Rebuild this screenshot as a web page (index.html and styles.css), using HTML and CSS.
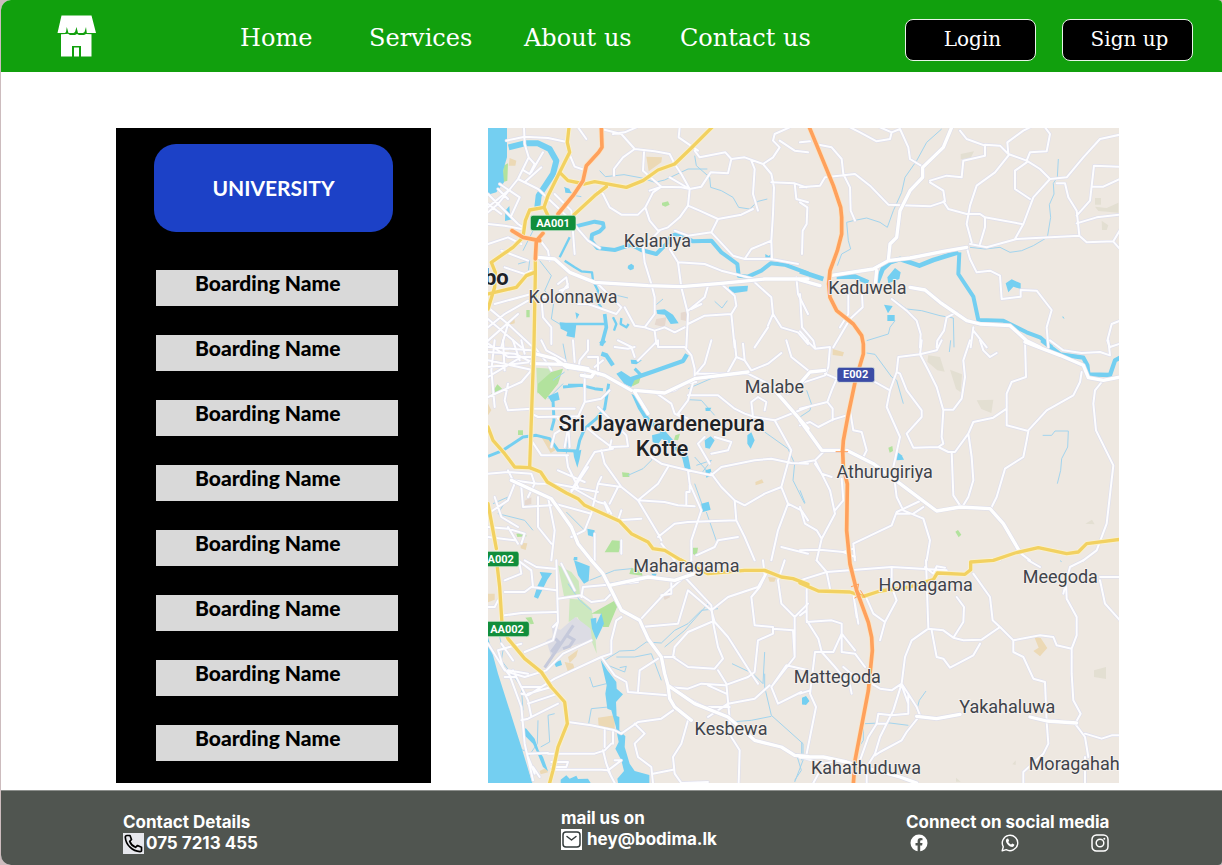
FILE: index.html
```html
<!DOCTYPE html>
<html lang="en">
<head>
<meta charset="utf-8">
<meta name="viewport" content="width=device-width, initial-scale=1">
<title>Bodima</title>
<link rel="stylesheet" href="styles.css">
</head>
<body>
<div class="page">
  <header class="header">
    <a class="logo" href="#" aria-label="Bodima home">
      <svg viewBox="0 0 39 42" width="39" height="42" aria-hidden="true">
        <path fill="#fff" d="M4.500 0.500H34.500L39 18H29.800L29 12L27.500 17L26 18H21L19.500 12L18 17L16.500 18H11.500L9.800 12L9 17L8 18H0.500Z"/>
        <path fill="#fff" d="M4 19.200L9 18.900L11 18.800L13 20H18L20 18.900L22 20H27L29 18.900L34.500 19.200V41.500H24V31H15V41.500H4Z"/>
        <path fill="#fff" d="M17 32.500H22V41.500H17Z"/>
      </svg>
    </a>
    <nav class="nav" aria-label="Main">
      <a href="#">Home</a>
      <a href="#">Services</a>
      <a href="#">About us</a>
      <a href="#">Contact us</a>
    </nav>
    <div class="account">
      <button class="account-button" type="button">Login</button>
      <button class="account-button" type="button">Sign up</button>
    </div>
  </header>

  <main class="main">
    <aside class="sidebar">
      <button class="university" type="button">UNIVERSITY</button>
      <ul class="boardings">
        <li><button class="boarding" type="button">Boarding Name</button></li>
        <li><button class="boarding" type="button">Boarding Name</button></li>
        <li><button class="boarding" type="button">Boarding Name</button></li>
        <li><button class="boarding" type="button">Boarding Name</button></li>
        <li><button class="boarding" type="button">Boarding Name</button></li>
        <li><button class="boarding" type="button">Boarding Name</button></li>
        <li><button class="boarding" type="button">Boarding Name</button></li>
        <li><button class="boarding" type="button">Boarding Name</button></li>
      </ul>
    </aside>

    <svg class="map" viewBox="0 2 1893 1965" role="img" aria-label="Map of Sri Jayawardenepura Kotte">
      <rect y="2" width="1893" height="1965" fill="#eee8e1"/>

      <!-- parks, sand and built areas -->
      <g class="park">
        <path d="M46 115L60 108L58 160L44 165ZM522 226L540 222L545 232L532 238L522 234ZM115 548h10v22h-10Z"/>
        <g transform="translate(0 639)"><path fill="#c9e6bb" d="M145 82L190 85L180 130L148 160Z"/><path d="M190 95L225 85L210 130L172 178L148 155L150 130ZM10 160L28 132L42 145L30 160L14 165ZM90 270h15v14h-15ZM402 396l22 2v12h-20ZM372 600L402 602L392 636L350 636ZM85 580l25-4 6 12-28 2ZM614 622h16l-4 26-12-8ZM430 118l28-8-5 18-20 10ZM562 285l14-5-6 20-12-2Z"/></g>
        <g transform="translate(936 639)"><path d="M265 322l12-5 2 15-10 5ZM466 574l8-5 10 14-8 8Z"/></g>
        <g transform="translate(0 1299)"><path fill="#cde8bf" d="M210 15L250 35L272 62L276 102L228 108ZM245 115L280 118L310 145L320 200L326 280L310 240L268 170L242 185Z"/><path d="M310 160L378 122L388 138L362 200L345 200L340 160ZM112 172l18-2 8 20-10 2ZM430 22l30 10 4 14-40-5Z"/></g>
      </g>
      <g class="sand">
        <path d="M475 88L522 90L520 105L482 132ZM65 92L85 100L82 115L62 115ZM62 580l18-4v12l-16 4Z"/>
        <path transform="translate(936 639)" d="M98 26l34 10-4 12-30-4Z"/>
        <path transform="translate(0 639)" d="M802 425l20-8 5 10-24 8ZM98 607l20 2-5 20-15-5ZM160 290l24 4 18 36-14 8ZM0 190l10 20-10 15Z"/>
        <path transform="translate(0 1299)" d="M330 472L380 465V508L332 500ZM240 290l30-22-5 20-20 20ZM230 305l25 5 5 15-20 10ZM0 100l20 0v18l-20 8ZM155 632l20-10 5 14-22 6ZM840 50l24 2-5 12-14 0Z"/>
        <path transform="translate(936 1299)" d="M702 228l20 5 20 30-22 25-20-16 16-10Z"/>
      </g>
      <g fill="#e3dfd2">
        <path transform="translate(936 0)" d="M482 80l40-8-10 20-30 4ZM885 238l35 4 35-16v30l-60-5ZM885 212h18v20h-18ZM905 280l20 14-5 14h-14Z"/>
        <path transform="translate(936 639)" d="M385 45l35 5 14 44-22-4-30-26ZM450 88l36 14-4 54-14-10ZM530 180l50-2-6 40-30-12ZM856 550l20-12 8 14Z"/>
        <path transform="translate(936 1299)" d="M882 330l36-10v36l-36-6ZM637 612l10-12v14ZM468 652l14 12h-14Z"/>
      </g>
      <path fill="#e5d8cf" d="M578 556l20-4v30l-20-5ZM505 575l30-5-5 30-30-8ZM524 1402l18-4 4 12-16 8ZM110 1120l20-10v20l-20 5Z"/>
      <path fill="#dcdce4" transform="translate(0 1299)" d="M175 240L195 230L192 202L218 208L262 170L308 205L312 238L250 258L205 280L190 290Z"/>
      <path transform="translate(0 1299)" fill="none" stroke="#c5c9db" stroke-width="9" d="M256 195L170 322M190 275L212 245L202 235M235 225L258 238L245 258L225 265"/>

      <!-- streams -->
      <g class="stream">
        <path d="M335 130L352 148L408 142L462 152L500 165L530 158L600 125L658 125M620 85L625 115L665 150L668 180L700 190L735 210L752 240L785 245L810 222L838 215M228 180L262 205L280 208M155 400L190 445L170 490L198 520L190 575L215 590M370 500L420 512M505 532L525 515M680 522L702 542L718 520M135 310L105 370M90 410L125 400L120 440"/>
        <path transform="translate(936 0)" d="M425 5L380 45L350 100L315 150L305 195L280 250L262 300L240 285L200 272L160 280L140 285L145 340L152 365L125 380L112 415M775 95L772 150L760 168L762 200L748 232L752 270L742 330L700 355L665 370L630 375L600 360L555 365L510 360M280 515L320 545L365 550L420 565L460 572L462 660M285 580L270 600L265 620L200 640"/>
        <path transform="translate(0 639)" d="M225 10L240 90M230 95L195 120M225 130L180 175M240 300L235 340M500 330L490 360L465 385L420 405M620 430L645 500M655 515L688 610M235 515L290 570M15 490L60 470L30 520L110 540L135 570M600 145L680 110L705 108M600 178L640 180L680 225M830 275L900 325L920 370L915 420L950 490M620 350L660 395M625 375L670 360L640 400"/>
        <path transform="translate(936 639)" d="M200 38L225 42L275 110L290 120L310 190M452 0L448 35M728 285L755 285L765 272L805 272L803 320L785 355L782 390L772 430M0 450L15 488M20 150L34 190L30 210L0 230"/>
        <path transform="translate(0 1299)" d="M240 70L275 120L310 150M305 60L380 30L430 25M330 75L420 60M350 300L395 272L440 270L475 245L520 248L560 210L600 190L640 150L690 145M530 260L590 210L665 125M385 290L440 290L490 280L520 360M360 315L410 335L415 318L395 322M305 350L315 380L355 370M302 490L310 445L360 440M150 480L148 550L120 590M200 460L180 465L185 545L158 560M732 310L795 340L825 370L830 275M830 340L830 380L850 465L945 550V600L920 665M730 485L790 480L850 468M35 230L45 270L40 300L100 380L105 450M80 560L120 575M925 580L940 630L920 660"/>
        <path transform="translate(936 1299)" d="M378 392L358 420L350 450M195 490L240 488L270 488L325 495M190 495L190 540L170 570M5 545V600M780 1L785 4"/>
      </g>

      <!-- sea, rivers and lakes -->
      <g class="water">
        <path d="M0 0H57V90L45 130L48 165L25 195L0 202ZM420 415l10-6 8 6-1 10-10 4-8-6ZM723 478L780 475L778 492L740 497L722 490ZM505 548L530 546L555 562L572 588L548 590L530 562L508 560ZM832 380l10 6 10-8-6 15-14 4ZM52 250l12-14 2 30 5 10-20 5ZM230 180l14 4 6 14-18-2ZM215 585l50 6-5 40-25-5 3-12-20-10ZM262 555l12 6-8 15Z"/>
        <path transform="translate(936 0)" d="M262 450L285 422L302 435L298 455L265 468ZM252 532l26 4-14 22ZM262 563h22v18h-22ZM617 468L635 456L662 468V485L640 478L625 495ZM788 565l6 10-6-4Z"/>
        <path transform="translate(0 639)" d="M180 168L210 155L215 178L190 185ZM385 100L400 92L440 118L430 140L410 132ZM430 160L448 170L462 205L482 230L475 245L450 205ZM492 285L518 278L550 300L560 325L540 312L522 295L510 312L494 305ZM582 350L600 345L608 385L592 392ZM650 300L668 288L680 300L665 325L652 322ZM778 285L790 276L800 300L788 325L778 310ZM652 390L668 385L672 405L655 412ZM640 490L662 484L668 508L642 516ZM298 565L320 570L318 590L300 585ZM428 58L462 60L445 72L430 70ZM652 202l18 0-5 10h-12ZM256 335L280 328L275 355L268 382L258 350ZM258 650h10v10h-12Z"/>
        <path transform="translate(936 639)" d="M288 350L292 335L305 345L312 358L290 360Z"/>
        <path transform="translate(0 1299)" d="M0 230L30 340L100 560L133 668H0ZM258 0L280 8L305 18L302 62L288 70L270 45ZM155 35L192 38L178 58L150 115L138 110L148 78L162 50ZM308 175L325 172V190L340 158L348 190L325 238L312 205ZM338 298L358 330L385 365L386 385L405 402L384 425L388 515L370 450L358 445L352 400L356 375ZM380 465L394 470V510L412 528L410 560L425 610L440 632L484 644V668H390L388 655L408 632L400 600L382 565L392 545L385 510ZM218 668V658L235 645L245 655L265 646L270 656L300 655L308 668ZM198 307L218 300L222 314L204 320ZM102 500L115 505L140 535L152 570L165 590L180 632L165 620L148 578L135 550L105 520ZM490 40l16 0-6 14ZM942 414l12-6 10 15-20 10Z"/>
        <path transform="translate(936 1299)" d="M6 412L18 408L28 422L18 434L6 432Z"/>
      </g>
      <g class="river">
        <path stroke-width="18" d="M62 60L110 48L150 48L185 65L205 100L195 140L172 175L152 205L148 240"/>
        <path stroke-width="12" d="M260 298L320 283L345 288L347 300L335 312L312 322L310 340L328 362L380 368L430 352L460 368L505 380L540 345L550 325L570 320L615 342L670 340L700 375L748 410L752 445L780 448L820 430L848 408L890 412L960 438"/>
        <path stroke-width="7" d="M245 330L215 390M230 400L260 420L280 432L312 435L315 460L330 490L325 520L340 540M215 590H350M375 570L385 590L378 610M400 572L398 590L415 600L422 590"/>
        <path stroke-width="11" d="M350 560L355 600L340 655"/>
        <path transform="translate(936 0)" stroke-width="14" d="M0 432L70 455M110 448H165L205 465M232 465L248 425L270 405L300 395L358 415L400 398L475 375"/>
        <path transform="translate(936 0)" stroke-width="12" d="M478 375L475 440L520 508L535 578L610 580L680 615L720 630L755 660"/>
        <path transform="translate(936 639)" stroke-width="13" d="M725 0L780 42L850 52L862 75L865 102L930 104L945 60L960 52"/>
        <path transform="translate(0 639)" stroke-width="13" d="M425 118L500 92L585 62L597 42M350 0L338 12M340 40L355 45L375 75"/>
        <path transform="translate(0 639)" stroke-width="9" d="M0 348L45 330L105 290L145 285L185 295L210 330L268 332L275 300L290 265L325 235L350 205L362 130M195 180L198 240L190 270M225 140L280 135L320 145L345 148M240 135H285M440 85L460 105"/>
        <path transform="translate(0 639)" stroke-width="14" d="M470 230L525 275L590 350"/>
      </g>

      <!-- minor roads: casing below, white line above -->
      <defs>
        <g id="minor">
          <path d="M55 40L110 28L180 32L240 45M108 0L110 50L122 90L90 155L30 230L0 255M0 200L90 290L105 300M35 170L95 210L70 265M90 155L150 185L235 265L300 340L335 362M122 90L140 110L125 140L108 130M165 75L130 135M60 190L0 240M0 290L50 295L100 305M30 185L60 215M160 120L110 165M0 230L40 260M270 0L295 35M240 70L260 118L290 128M375 20L410 15L445 0M340 5L400 20L440 65L500 72L545 80L560 110L580 140L605 185L600 235M440 65L405 90L378 125L378 145M468 75L465 130L520 178L495 195L472 240L450 262L400 262L365 240L345 200L330 190M520 178L580 180L605 185M520 178L485 190M545 150L605 185L640 178L668 135L720 138L730 95L712 75L635 90L620 70M575 0L572 30L630 70M730 95L770 90L825 110L850 140L858 180L855 260L850 340L852 395M790 100L800 125L795 200L810 250M825 110L855 90L875 60L855 40L860 20L905 0M875 40L920 70L960 75M850 165L920 168L955 180M920 168L925 215L960 225M600 235L575 270L540 300L510 310L485 280L472 240M600 235L635 250L690 275L760 262L795 245M690 275L670 315L600 325L560 310M670 315L735 385L770 395M770 395L790 365L850 340M770 395H850L930 410M515 310L465 360L470 405L490 470L500 510L500 560L470 600L440 595L410 540M545 365L570 405L580 480L600 560L595 660M570 405L650 410L700 430L800 455M600 550L650 510L660 475M600 590L650 565L730 560L740 660M610 545L640 530M700 470L740 505L745 535L730 560M800 465L850 510L855 560L880 600L930 615L960 650M840 600L800 660M840 595L855 560M925 450L930 500L960 560M0 350L60 330L100 350M40 370L120 400M0 540L60 590L130 655M0 600L50 560L120 520M20 530L130 500M0 640L90 560M0 575L100 660M60 590L40 660M155 510H210L240 470M160 510L165 570L190 600V650M210 470L235 450L240 480L215 490M330 470L370 510L400 540L385 560L300 530L270 530M260 380L250 250L200 200M150 330L180 370L185 400M470 600L500 610L530 600L560 615L590 600M500 610L505 650M50 420L110 440L130 430"/>
          <path transform="translate(936 0)" d="M150 0L180 15L230 42L270 35L275 15L300 5M275 15L240 0M300 5L325 60L330 95L368 118M0 45L30 42M45 50L95 60L125 95L130 140L150 180L152 250L165 280M0 180L60 175L75 150L165 140L210 175L265 232L390 237L435 222L430 190L390 165M430 222L445 245L500 260L540 260L555 270M390 160L440 145L485 150L490 100L555 85V55L500 35L480 10M555 52L600 55L625 80L680 100L720 125L750 155L800 150L850 90L900 35L960 22M625 80L622 45L670 10L690 0M680 100L690 75L740 72L750 20L735 0M625 85L585 135L530 175L510 235L500 290L515 345M680 105L645 130V185L690 215M750 155L700 210L670 290L645 335M555 270L665 290M555 270L555 300L540 350M770 168H795L805 210L830 250L838 325L650 335L560 360L510 350M830 265L870 220L882 115L960 118M830 288L890 270L960 262M875 178L910 178L960 155M838 325L860 345L940 342L960 308M942 345L960 365M500 360L510 395L530 435L570 430L600 445L605 515L662 508V488L710 490L755 548L740 600L745 660M275 515L320 550L350 580L362 620L360 660M145 490V560L120 600M185 480L188 540L150 575L100 660M470 555L440 570L432 610L412 640L410 660M520 600L512 660M520 610L560 660M0 225L22 240L20 290L8 310L6 380M0 500L6 600L40 640L45 660M0 612L24 640M960 580L935 590L922 640L930 660"/>
          <path transform="translate(0 639)" d="M0 20L130 30M0 80L130 65L80 40L0 35M0 60L130 88M0 110L100 50M0 170L100 125L130 90M20 0L10 90L20 200M45 0L50 90M75 0L95 60M100 0L110 40M0 10L60 50L130 50M60 130L50 180L60 210L130 205M140 20L175 65L190 90M160 0L175 30L230 60L235 70M255 0L260 65M300 0V30L275 60L270 90M330 50V105M300 50L330 50M345 60L320 80M390 0L430 20L440 50M380 20L420 25L440 20M510 0V20L590 20L610 45L620 85V110L600 180L570 220L600 235M510 0L450 60M670 0L650 70L625 100M740 0L745 50L770 60L765 10M745 50L720 95M770 60L790 90L840 70L880 38M895 0L910 50L960 90M625 100H780L900 160M600 165H690L740 205L770 220L800 230L860 240L910 330L880 440L900 490L870 570L850 660M795 230L790 185L810 170L835 185L830 210M860 240L960 200M960 640L880 620M435 150L525 158L560 150L590 130L625 125M500 155L550 190L560 220L580 230M290 100V185L265 240L200 280L190 320M290 185L340 175L365 150M140 205H260M130 220L150 230L290 228M130 300L160 345L240 345M235 345L240 380L270 440M210 235L240 265L230 320M240 240L245 320M300 265L330 290L370 320L420 318L415 285L330 200M370 300L365 325M340 330L350 370L400 440L450 480L510 580L520 600M375 325L320 335L280 400L250 450M500 320L490 350L520 370L600 390L670 405L700 380L800 360L850 355L910 368L960 370M540 380L510 430L450 480L530 485L570 495L620 498M600 390L605 430L640 510L610 600V660M605 435V455H595V495M670 400L700 440L740 480L745 540L770 590L800 660M740 480L770 495L830 460L880 440M745 540L600 545L560 550L510 590M690 600L750 590M690 600L680 620L625 645M900 490L940 510L960 540M650 290L630 310L665 370M680 290L730 305L720 330L670 340M0 400L60 395L130 400M60 390L75 420L150 430L200 430L330 455M130 400L140 430L120 470M80 430L60 480L0 520M100 440L105 500L190 495M20 470L40 530L90 560M150 470V560L190 610M180 470L200 570L190 660M0 560L60 565L110 580L100 610M60 560L90 610M0 590L80 600M250 440L330 485L350 490L360 515M250 455L300 380M330 430L310 520L290 570L250 590M340 410L330 430L400 440M365 490L390 440M400 600V640M320 580V660M520 610L560 660M400 510L390 540L460 535M370 520L350 485M200 490L310 520M210 390L290 425"/>
          <path transform="translate(936 639)" d="M20 0L45 25L90 20L85 80L75 105L0 130M75 100L110 115L95 150L82 185L98 205V240M0 205L82 185M140 225L98 238L55 260L30 245L0 255M150 210L160 270L185 275L200 330L190 350M70 335L45 360L0 368M45 360L90 450L105 520L65 595L50 660M125 415L130 480L105 510M0 500L15 550L50 570L65 595M0 630L60 628L130 635L160 625M45 370L65 400L95 410M130 635L165 650M285 430L290 470L310 510L370 535L390 600L380 660M360 482L290 515L275 555L160 610L165 660M370 500L340 520M225 125L270 150L290 95L300 100L320 150L365 210V230L320 280L340 322L415 320L445 335H465L505 280L520 245L580 232L620 205M270 150L260 200L300 290L280 380M290 95L295 50L360 42L365 0M360 42L385 90L410 140L430 210L425 290L430 310L415 320M360 42L410 30L425 0M510 0L490 60L495 110L485 175L460 208H430M540 0L550 30L570 50L590 38M675 0L678 110L635 125L620 160V255L685 272L680 300L670 350L615 385L590 470L575 500M685 270L740 210L820 165L840 125L845 95M455 335L460 465L480 495M505 280L515 350L520 420L505 470L490 495M905 125L885 150L880 190L888 270L940 375L920 550L890 630L850 660M750 0L790 30L845 38L900 35L930 45L925 0M930 20L960 10M650 630L690 660M290 520L330 520"/>
          <path transform="translate(0 1299)" d="M0 140L20 140L30 120M50 95H110L130 80L205 90M60 0L95 12L100 40L50 60M90 0L130 30L135 80M205 0L210 185L195 240L110 275M50 165L100 158L205 155M110 0L145 20L200 25M210 115L280 105L310 125L350 120L370 100M280 110L285 80L450 65M220 10L260 90M400 170L385 180L370 240V280L340 290L200 355L120 405L100 400M310 240L225 280L175 330L110 350L60 335M340 290L380 345L415 365L420 395L540 405M455 180L520 110L600 40L610 0M550 60V100L520 105M460 200L570 190L600 90L670 150L680 185L720 230L790 340L810 370M590 50L670 135L675 185L690 260L705 295L680 325L600 320L555 290L560 260L600 215L670 185M520 290H560M450 395L455 330L510 295M540 380L600 385L640 370L710 375L780 350L800 335L810 240L855 220V200L800 195L790 110L815 80L840 30M670 150L720 110L810 80L830 45L825 0M855 205L915 210L920 290L850 380L870 430L940 395M870 60L880 130L920 170V290M920 170L960 130M845 375L800 415L720 430L660 470M715 370L730 530L755 570L752 668M690 330L715 370M850 380L895 315L960 330M890 0L870 60M240 485L310 495L380 510L400 520L450 485L520 475L555 450M440 490L470 520L440 550L450 590L490 620L495 668M495 640L555 628M600 480L580 550L555 590L560 640L580 668L660 665M100 480L120 475L210 430M30 270L100 250M30 270L45 320L65 345L100 440L110 550L135 660M60 330L120 340M50 350H85L120 420L130 470M75 330L100 380L160 380M120 400L190 380M120 430L210 400M180 580L320 580L350 570L370 550M350 510V560M375 515V550M345 570L355 610L370 650M190 605H240L235 620H190M195 628L340 628L360 630L380 668M120 580L180 578M135 620L155 650M120 590L140 640M380 600L400 600L360 630M210 185L195 200M660 375L715 400M0 250L50 330M725 440L650 440L590 410M40 250L75 300"/>
          <path transform="translate(936 1299)" d="M0 60L80 35L275 20L440 30M50 0L80 35L90 85M20 80V180L55 235L65 275L105 320L150 375L155 400M0 165L20 150M20 185L95 180L125 190V275L165 280L195 320M45 275H100L125 220L165 270M45 275L30 400L48 440L30 530L20 580M0 400L30 390M165 130L175 190M200 115L220 160L255 185L240 240M275 20V80L290 120L255 185M378 0L385 205L335 240L315 290L305 370L275 390L240 385L215 370M385 205L430 210L460 232L490 240L545 238L600 200L640 240L720 225L760 230L770 255L815 265M395 210L410 290L430 295L450 322L520 285L540 250M460 232L490 185L492 140L470 110M520 40L570 110L578 180L600 200M640 240V275L670 290L700 355L735 365L740 485L745 550L730 580L670 635V668M798 60L800 115L830 170V225L815 265V340L820 420L842 460L825 490L855 530L865 590M855 520L905 535L935 525H960M900 60L915 130L960 180M760 480L825 490M305 370L350 440L360 465L320 515L305 540L240 575L225 585M305 370L280 450L240 530L225 580L200 620V668M325 400V460L275 465L235 460L230 490L205 530L180 600M305 375L325 430M230 490L260 490L280 450M0 590L70 610L120 600M55 640L40 668M560 0L600 0M685 0L720 20M850 0L810 20L790 100M855 590V668M900 50H960M375 20L400 40L410 18L435 22M160 100L170 170M130 320L165 350"/>
        </g>
        <g id="trunk">
          <path d="M150 390L200 395L245 435L320 465L480 475L580 478L700 468L830 455L960 455"/>
          <path transform="translate(936 0)" d="M0 458L60 475M90 445L220 425L265 400L270 350L290 330L300 250L330 190L368 150V120L430 60L455 0M230 430L225 480M265 400L330 392L430 372L500 360M330 480L375 488L420 525L500 580L540 590L630 595L680 640L720 660"/>
          <path transform="translate(0 639)" d="M140 40L200 55L235 80L300 90L350 105L430 150M130 70L230 72L300 85M440 150L530 158L620 115L780 95M440 155L480 220M860 150L960 265M70 420L190 475L250 560L270 610L310 660M280 105L310 110L320 95"/>
          <path transform="translate(936 639)" d="M0 130L30 95L75 90M0 240L65 330L140 330L220 370L300 430L410 512L480 500L570 505L610 550L660 635M675 5L780 45L850 75L865 112L910 120L960 110"/>
          <path transform="translate(0 1299)" d="M310 0L345 40L370 90L400 150L455 180L480 235L520 290L530 340L540 375L620 430L720 470L800 540L880 560L920 585L960 588M540 375L545 415L560 440L610 480M365 75L480 50L560 60L620 40"/>
          <path transform="translate(936 1299)" d="M0 590L70 590L140 605L190 620L300 650L350 668M350 468L410 475L480 462M690 470L740 482L830 488"/>
        </g>
        <g id="yellow">
          <path d="M243 0L238 45L245 75L215 135L180 205L168 240L125 248L112 280L105 330L75 360L10 405L22 435L20 480L0 545M168 240L180 265M215 135L240 160L290 170L320 163L415 180L465 160L510 128L560 110L610 62L672 0M355 178L320 205L258 262M142 390V440L138 650L125 1020M140 435L115 445L85 480L0 500"/>
          <path transform="translate(0 639)" d="M0 260L15 300L50 340L80 380L125 382L158 395L178 425L235 458L270 475L290 495L395 543L430 580L480 605L495 625L530 630L580 660M0 490L25 625"/>
          <path transform="translate(0 1299)" d="M28 20L35 80L42 190L60 235L110 295L160 335L190 380L230 425L238 490L210 560L195 630L185 668M580 0L660 40L770 30H830L880 50L915 55L960 72"/>
          <path transform="translate(936 1299)" d="M0 68L55 92L150 95L190 108L240 92L330 80L400 58L412 38L495 42L512 28V5L580 0L645 -22L715 -38L800 -20L835 -25L860 -50L960 -63"/>
        </g>
        <g id="orange">
          <path d="M340 0L342 60L332 75L295 115L285 160L255 205L210 260M165 318L145 340L142 395M72 310L105 330L155 340"/>
          <path transform="translate(936 0)" d="M28 0L100 175L122 240L125 270V320L112 370L90 430L86 470L90 510L110 550L160 590L185 625L190 650V680L165 765L145 860L130 940L128 970L130 1020L142 1070L140 1210L150 1310L170 1390L205 1485L215 1530L217 1570L205 1690L165 1900L160 1970"/>
        </g>
      </defs>
      <use href="#minor" class="minor-case"/><use href="#minor" class="minor-line"/>
      <use href="#trunk" class="trunk-case"/><use href="#trunk" class="trunk-line"/>
      <use href="#yellow" class="yellow-case"/><use href="#yellow" class="yellow-line"/>
      <use href="#orange" class="orange-case"/><use href="#orange" class="orange-line"/>
      <path class="ramp" d="M1044 973h35M1090 1378l22-8-4 20 10 12-18 10M1118 1390l12 20"/>

      <!-- road shields -->
      <g class="shield">
        <rect x="127" y="264" width="137" height="46" rx="8"/><text x="195" y="299">AA001</text>
        <rect x="-40" y="1272" width="133" height="46" rx="8"/><text x="38" y="1306">A002</text>
        <rect x="-16" y="1482" width="140" height="46" rx="8"/><text x="57" y="1516">AA002</text>
        <rect class="express" x="1047" y="720" width="113" height="45" rx="8"/><text x="1103" y="753">E002</text>
      </g>

      <!-- place names -->
      <g class="place">
        <text x="508" y="360">Kelaniya</text>
        <text x="255" y="527">Kolonnawa</text>
        <text x="1138" y="499">Kaduwela</text>
        <text x="859" y="797">Malabe</text>
        <text x="1190" y="1052">Athurugiriya</text>
        <text x="595" y="1334">Maharagama</text>
        <text x="1313" y="1392">Homagama</text>
        <text x="1717" y="1366">Meegoda</text>
        <text x="1048" y="1667">Mattegoda</text>
        <text x="1558" y="1758">Yakahaluwa</text>
        <text x="729" y="1823">Kesbewa</text>
        <text x="1134" y="1940">Kahathuduwa</text>
        <text class="clipped" x="1622" y="1928">Moragahah</text>
      </g>
      <g class="city">
        <text x="521" y="912">Sri Jayawardenepura</text>
        <text x="522" y="986">Kotte</text>
        <text class="capital" x="62" y="472">bo</text>
      </g>
    </svg>
  </main>

  <footer class="footer">
    <section class="contact">
      <h2>Contact Details</h2>
      <a class="contact-line" href="tel:0757213455">
        <svg viewBox="0 0 21 21" width="21" height="21" aria-hidden="true">
          <rect width="21" height="21" fill="#e6e7ec"/>
          <path fill="none" stroke="#000" stroke-width="1.700" stroke-linejoin="round" d="M4 2.500H7L8.500 6.500L6.700 8.400C7.800 11.300 9.700 13.200 12.500 14.300L14.500 12.500L18.500 14.300V17.500C18.500 18.300 17.800 18.800 17 18.700C9.500 18.300 2.800 12 2.300 4.200C2.300 3.300 3 2.500 4 2.500Z"/>
        </svg>
        <span>075 7213 455</span>
      </a>
    </section>
    <section class="contact contact-mail">
      <h2>mail us on</h2>
      <a class="contact-line mail-line" href="mailto:hey@bodima.lk">
        <svg viewBox="0 0 21 21" width="21" height="21" aria-hidden="true">
          <rect width="21" height="21" fill="#fff"/>
          <rect x="2" y="3" width="17" height="15" rx="3" fill="none" stroke="#333b3b" stroke-width="1.500"/>
          <path d="M6 7.500L10.500 11L15 7.500" fill="none" stroke="#333b3b" stroke-width="1.500" stroke-linecap="round" stroke-linejoin="round"/>
        </svg>
        <span>hey@bodima.lk</span>
      </a>
    </section>
    <section class="contact">
      <h2>Connect on social media</h2>
      <div class="social">
        <a href="#" aria-label="Facebook">
          <svg viewBox="0 0 18 18" width="18" height="18"><circle cx="9" cy="9" r="8.500" fill="#fff"/><path fill="#505550" d="M7.600 18V11.600H5.500V9.100H7.600V7.200C7.600 5.100 8.800 4 10.700 4L12.500 4.200V6.200H11.400C10.400 6.200 10.200 6.800 10.200 7.500V9.100H12.500L12.100 11.600H10.200V18Z"/></svg>
        </a>
        <a href="#" aria-label="WhatsApp">
          <svg viewBox="0 0 18 18" width="18" height="18"><path fill="none" stroke="#fff" stroke-width="1.400" stroke-linejoin="round" d="M1.200 16.800L2.300 12.800A7.700 7.700 0 1 1 5.200 15.700Z"/><path fill="#fff" d="M6.200 4.600L7.300 4.700L8.100 6.800L7.300 7.900C8 9.200 8.900 10 10.200 10.600L11.200 9.500L13.300 10.500C13.400 12 12.300 12.800 11.200 12.900C8.500 12.800 5.200 9.500 4.900 6.900C4.900 5.900 5.400 5 6.200 4.600Z"/></svg>
        </a>
        <a href="#" aria-label="Instagram">
          <svg viewBox="0 0 18 18" width="18" height="18" fill="none" stroke="#fff" stroke-width="1.500"><rect x="1" y="1" width="16" height="16" rx="4.500"/><circle cx="9" cy="9" r="3.800"/><circle cx="13.300" cy="4.700" r="1" fill="#fff" stroke="none"/></svg>
        </a>
      </div>
    </section>
  </footer>
</div>
</body>
</html>
```
FILE: styles.css
```css
* {
  box-sizing: border-box;
}

body {
  margin: 0;
  background: #cdbcbe;
  font-family: Inter, "Liberation Sans", sans-serif;
}

a {
  color: inherit;
  text-decoration: none;
}

button {
  font: inherit;
  cursor: pointer;
}

.page {
  display: flex;
  flex-direction: column;
  min-height: 100vh;
  margin-left: 1px;
  overflow: hidden;
  border-radius: 10px 4px 4px 10px;
  background: #fff;
}

/* Header */

.header {
  display: flex;
  align-items: flex-start;
  height: 72px;
  padding: 0 29px 0 56px;
  background: #11a00d;
  color: #fff;
  font-family: "DejaVu Serif", "Liberation Serif", serif;
}

.logo {
  display: flex;
  width: 183px;
  padding-top: 15px;
}

.nav {
  display: grid;
  grid-template-columns: 129px 155px 156px auto;
  padding-top: 23px;
  font-size: 24px;
  line-height: 30px;
  white-space: nowrap;
}

.account {
  display: flex;
  gap: 26px;
  margin-left: auto;
  padding-top: 19px;
}

.account-button {
  width: 131px;
  height: 42px;
  padding: 0 0 3px 4px;
  border: 1px solid #e8f5e8;
  border-radius: 8px;
  background: #000;
  color: #fff;
  font-size: 20px;
}

/* Main */

.main {
  display: flex;
  gap: 57px;
  padding: 56px 103px 7px 115px;
}

.sidebar {
  flex: none;
  width: 315px;
  padding: 16px 33px 22px 38px;
  background: #000;
  font-family: Lato, "Open Sans", sans-serif;
  font-size: 21px;
  font-weight: 700;
}

.university {
  display: block;
  width: 239px;
  height: 88px;
  padding: 0 0 2px;
  border: 0;
  border-radius: 22px;
  background: #1c41c7;
  color: #fff;
}

.boardings {
  display: grid;
  gap: 29px;
  margin: 38px 0 0;
  padding: 0 0 0 2px;
  list-style: none;
}

.boarding {
  display: block;
  width: 100%;
  height: 36px;
  padding: 0 0 10px 39px;
  border: 0;
  background: #d9d9d9;
  color: #000;
  font-weight: 900;
  line-height: 26px;
  text-align: left;
}

.map {
  flex: 1;
  min-width: 0;
  display: block;
}

/* Map features */

.park { fill: #b2e29d; }
.sand { fill: #ecd9b5; }

.stream {
  fill: none;
  stroke: #a2d4ee;
  stroke-width: 3;
}

.water { fill: #74cff1; }

.river {
  fill: none;
  stroke: #74cff1;
  stroke-linejoin: round;
}

.minor-case,
.minor-line,
.trunk-case,
.trunk-line,
.yellow-case,
.yellow-line,
.orange-case,
.orange-line,
.ramp {
  fill: none;
  stroke-linecap: round;
  stroke-linejoin: round;
}

.minor-case { stroke: #dfdfec; stroke-width: 10; }
.minor-line { stroke: #fdfdff; stroke-width: 6; }
.trunk-case { stroke: #dfdfea; stroke-width: 14; }
.trunk-line { stroke: #fff; stroke-width: 10; }
.yellow-case { stroke: #faf1cf; stroke-width: 15; }
.yellow-line { stroke: #f2d161; stroke-width: 10; }
.orange-case { stroke: #fbe4c4; stroke-width: 16; }
.orange-line { stroke: #ffa15c; stroke-width: 11; }
.ramp { stroke: #ffa15c; stroke-width: 3; }

.shield {
  font-family: Roboto, sans-serif;
  font-size: 33px;
  font-weight: 700;
  text-anchor: middle;
}

.shield rect {
  fill: #118e3c;
  stroke: #e8f1e4;
  stroke-width: 2;
}

.shield .express { fill: #3c4ca6; }
.shield text { fill: #fff; }

.place,
.city {
  fill: #40434a;
  stroke: #f5f1ed;
  stroke-width: 6;
  stroke-linejoin: round;
  paint-order: stroke;
  font-family: Roboto, sans-serif;
  font-size: 54px;
  text-anchor: middle;
}

.place .clipped { text-anchor: start; }

.city {
  fill: #202226;
  font-size: 66px;
  font-weight: 500;
}

.city .capital {
  text-anchor: end;
  font-weight: 700;
}

/* Footer */

.footer {
  display: grid;
  grid-template-columns: 438px 345px auto;
  justify-content: start;
  align-items: start;
  flex: 1;
  padding: 21px 0 11px 122px;
  border-top: 1px solid #8c8f8c;
  background: #505550;
  color: #fff;
  font-size: 17px;
  font-weight: 700;
  line-height: 21px;
}

.contact {
  display: grid;
}

.footer h2 {
  margin: 0;
  font: inherit;
}

.contact-mail {
  margin-top: -4px;
}

.contact-line {
  display: flex;
  gap: 2px;
}

.mail-line {
  gap: 5px;
}

.social {
  display: flex;
  justify-content: space-between;
  padding: 1px 0 0 4px;
}

.social a {
  display: flex;
}
```
